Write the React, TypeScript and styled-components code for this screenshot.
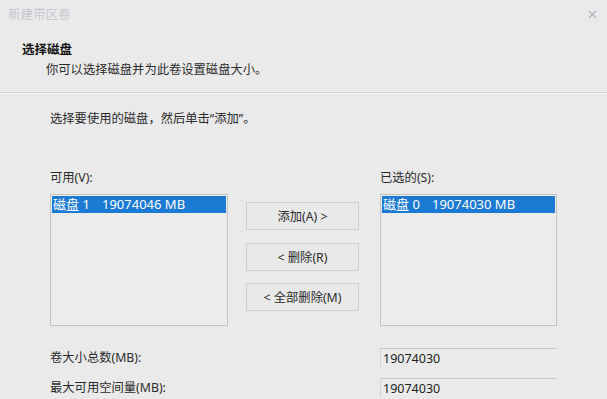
import React from "react";
import styled, { createGlobalStyle } from "styled-components";

const Global = createGlobalStyle`
  html, body { margin: 0; padding: 0; }
  body {
    width: 607px;
    height: 399px;
    overflow: hidden;
    background: #eaeaea;
    font-family: "Noto Sans", "Noto Sans CJK SC", sans-serif;
    color: #1e1e1e;
  }
`;

const Window = styled.div`
  width: 607px;
  height: 399px;
  display: flex;
  flex-direction: column;
  background: #eaeaea;
  overflow: hidden;
`;

const TitleBar = styled.div`
  height: 30px;
  display: flex;
  align-items: center;
  justify-content: space-between;
  padding: 0 10px 0 8px;
  box-sizing: border-box;
`;

const Title = styled.span`
  font-size: 12.5px;
  color: #c6c6cf;
  line-height: 16px;
  margin-top: -1px;
`;

const CloseIcon = styled.svg`
  width: 9px;
  height: 9px;
  margin-top: -2px;
`;

const Header = styled.div`
  height: 62px;
  box-sizing: border-box;
  padding: 12px 0 0 22px;
  display: flex;
  flex-direction: column;
  gap: 4px;
`;

const HeaderTitle = styled.div`
  font-size: 12.5px;
  font-weight: 700;
  line-height: 16px;
  color: #111;
`;

const HeaderSub = styled.div`
  font-size: 12.3px;
  line-height: 16px;
  padding-left: 24px;
  color: #2a2a2a;
`;

const Separator = styled.div`
  height: 1px;
  background: #d3d3db;
  border-bottom: 1px solid #f6f6f8;
`;

const Content = styled.div`
  padding: 17px 0 0 50px;
  display: flex;
  flex-direction: column;
`;

const Text = styled.div`
  font-size: 12.3px;
  line-height: 16px;
  color: #2a2a2a;
`;

const Columns = styled.div`
  display: flex;
  margin-top: 43px;
  align-items: flex-start;
`;

const ListColumn = styled.div<{ $width: number }>`
  display: flex;
  flex-direction: column;
  gap: 8px;
  width: ${(p) => p.$width}px;
`;

const ListBox = styled.div`
  height: 132px;
  border: 1px solid #c4c4c8;
  box-sizing: border-box;
  background: #ececec;
  padding: 1px;
`;

const Item = styled.div`
  height: 17px;
  background: #1a7ad4;
  color: #fff;
  font-size: 13px;
  line-height: 17px;
  display: flex;
  white-space: nowrap;
`;

const ItemName = styled.span`
  width: 50px;
  padding-left: 1px;
  box-sizing: border-box;
`;

const Buttons = styled.div`
  display: flex;
  flex-direction: column;
  gap: 12.5px;
  margin: 32px 21px 0 18px;
`;

const Button = styled.button`
  width: 113px;
  height: 28px;
  border: 1px solid #cfcfd2;
  background: #e9e9e9;
  font-family: inherit;
  font-size: 12.3px;
  color: #2a2a2a;
  padding: 0;
  display: flex;
  align-items: center;
  justify-content: center;
`;

const Fields = styled.div`
  display: flex;
  flex-direction: column;
  gap: 10px;
  margin-top: 22px;
`;

const FieldRow = styled.div`
  display: flex;
  align-items: center;
`;

const FieldLabel = styled.div`
  width: 330px;
  font-size: 12.3px;
  line-height: 16px;
  color: #2a2a2a;
`;

const FieldValue = styled.div`
  width: 177px;
  height: 20px;
  box-sizing: border-box;
  border-top: 1px solid #c8c8cc;
  border-left: 1px solid #d4d4d8;
  padding-left: 2px;
  font-size: 12.5px;
  line-height: 19px;
  color: #1e1e1e;
`;

export default function App() {
  return (
    <Window>
      <Global />
      <TitleBar>
        <Title>新建带区卷</Title>
        <CloseIcon viewBox="0 0 9 9">
          <path d="M1 1L8 8M8 1L1 8" stroke="#aeaec0" strokeWidth="1.1" />
        </CloseIcon>
      </TitleBar>
      <Header>
        <HeaderTitle>选择磁盘</HeaderTitle>
        <HeaderSub>你可以选择磁盘并为此卷设置磁盘大小。</HeaderSub>
      </Header>
      <Separator />
      <Content>
        <Text>选择要使用的磁盘，然后单击“添加”。</Text>
        <Columns>
          <ListColumn $width={178}>
            <Text>可用(V):</Text>
            <ListBox>
              <Item>
                <ItemName>磁盘 1</ItemName>
                <span>19074046 MB</span>
              </Item>
            </ListBox>
          </ListColumn>
          <Buttons>
            <Button>添加(A) &gt;</Button>
            <Button>&lt; 删除(R)</Button>
            <Button>&lt; 全部删除(M)</Button>
          </Buttons>
          <ListColumn $width={177}>
            <Text>已选的(S):</Text>
            <ListBox>
              <Item>
                <ItemName>磁盘 0</ItemName>
                <span>19074030 MB</span>
              </Item>
            </ListBox>
          </ListColumn>
        </Columns>
        <Fields>
          <FieldRow>
            <FieldLabel>卷大小总数(MB):</FieldLabel>
            <FieldValue>19074030</FieldValue>
          </FieldRow>
          <FieldRow>
            <FieldLabel>最大可用空间量(MB):</FieldLabel>
            <FieldValue>19074030</FieldValue>
          </FieldRow>
        </Fields>
      </Content>
    </Window>
  );
}
